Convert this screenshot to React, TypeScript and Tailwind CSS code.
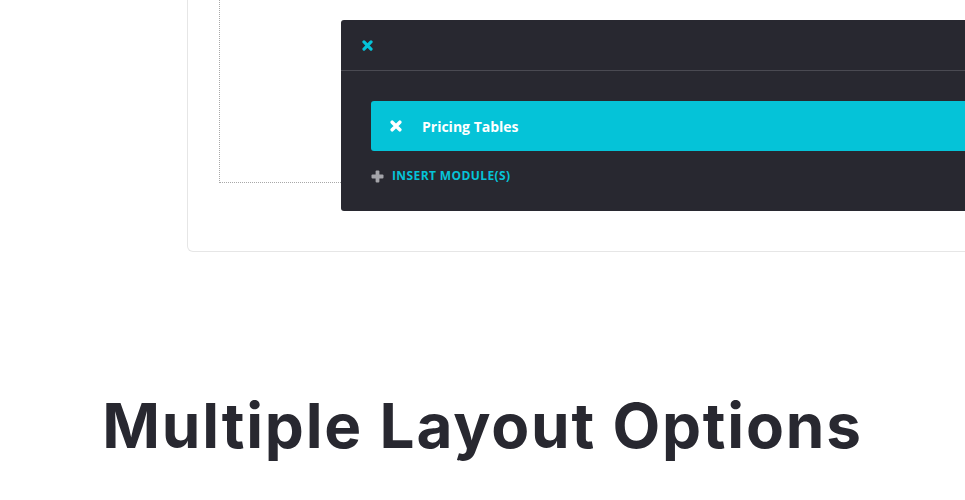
function HeavyX({ className }: { className?: string }) {
  return (
    <svg viewBox="0 0 10 10" className={className} fill="none">
      <path d="M1.8 1.8 L8.2 8.2 M8.2 1.8 L1.8 8.2" stroke="currentColor" strokeWidth="2.9" strokeLinecap="round" />
    </svg>
  );
}

function HeavyPlus({ className }: { className?: string }) {
  return (
    <svg viewBox="0 0 13 13" className={className}>
      <rect x="4.6" y="0.5" width="3.8" height="12" rx="1" fill="currentColor" />
      <rect x="0.5" y="4.6" width="12" height="3.8" rx="1" fill="currentColor" />
    </svg>
  );
}

export default function App() {
  return (
    <div className="w-[965px] h-[500px] overflow-hidden bg-white" style={{ fontFamily: '"Open Sans", sans-serif' }}>
      {/* Builder card */}
      <div className="pl-[187px]">
        <div className="flex w-[900px] border border-t-0 border-[#e6e6e6] rounded-b-[6px] pl-[31px] pb-[40px]">
          <div className="w-[122px] h-[183px] shrink-0 border-l border-b border-dotted border-[#a8a8a8]" />
          <div className="mt-[20px] h-[191px] flex-1 bg-[#282830] rounded-[3px]">
            <div className="h-[51px] flex items-center pl-[21px] border-b border-[#4a4a52]">
              <HeavyX className="text-[#05c3d8] w-[11px] h-[11px]" />
            </div>
            <div className="pl-[30px] pt-[30px]">
              <div className="h-[50px] flex items-center bg-[#05c3d8] rounded-l-[3px] pl-[19px] text-white">
                <HeavyX className="w-[12px] h-[12px]" />
                <span className="ml-[20px] text-[14px] font-bold">Pricing Tables</span>
              </div>
              <div className="flex items-center mt-[15px] h-[20px]">
                <HeavyPlus className="text-[#a4a4a9] w-[13px] h-[13px]" />
                <span className="ml-[8px] text-[12px] font-bold text-[#05c3d8] tracking-[0.4px]">INSERT MODULE(S)</span>
              </div>
            </div>
          </div>
        </div>
      </div>

      {/* Section heading */}
      <h2
        className="mt-[134px] text-center text-[62px] font-bold leading-[80px] text-[#282830] tracking-[1.8px]"
        style={{ fontFamily: 'Inter, sans-serif' }}
      >
        Multiple Layout Options
      </h2>
    </div>
  );
}
